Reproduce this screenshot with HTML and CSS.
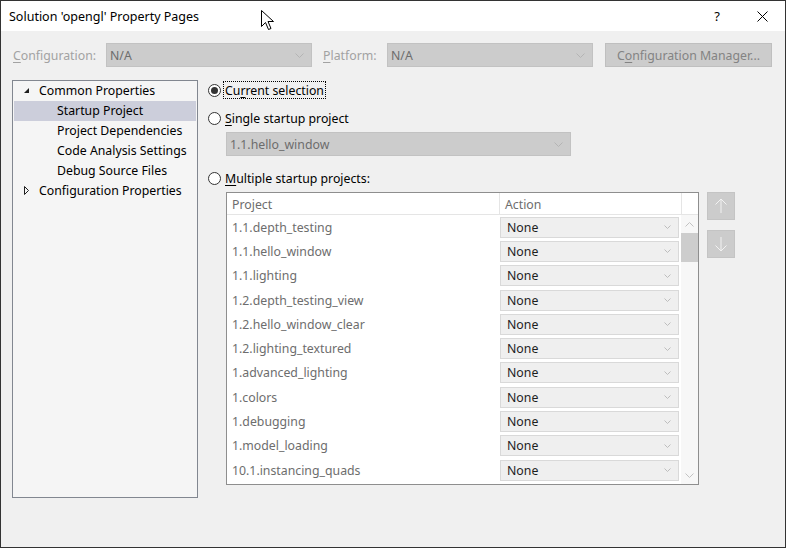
FILE: index.html
```html
<!DOCTYPE html>
<html>
<head>
<meta charset="utf-8">
<title>Solution 'opengl' Property Pages</title>
<link rel="stylesheet" href="styles.css">
</head>
<body>
<div class="window">
  <div class="titlebar">
    <span class="title">Solution 'opengl' Property Pages</span>
    <span class="tb-btn tb-help">?</span>
    <span class="tb-btn tb-close">
      <svg width="11" height="11" viewBox="0 0 11 11"><path d="M0.5 0.5 L10.5 10.5 M10.5 0.5 L0.5 10.5" stroke="#000" stroke-width="1" fill="none"/></svg>
    </span>
  </div>

  <div class="toolbar">
    <span class="lbl lbl-config"><u>C</u>onfiguration:</span>
    <div class="combo combo-wide"><span class="combo-text">N/A</span>
      <svg class="chev" width="9" height="5" viewBox="0 0 9 5"><path d="M0.5 0.5 L4.5 4.5 L8.5 0.5" stroke="#b4b4b4" fill="none"/></svg>
    </div>
    <span class="lbl lbl-platform"><u>P</u>latform:</span>
    <div class="combo combo-wide"><span class="combo-text">N/A</span>
      <svg class="chev" width="9" height="5" viewBox="0 0 9 5"><path d="M0.5 0.5 L4.5 4.5 L8.5 0.5" stroke="#b4b4b4" fill="none"/></svg>
    </div>
    <div class="btn-cm">C<u>o</u>nfiguration Manager...</div>
  </div>

  <div class="main">
    <div class="tree">
      <div class="tree-row lvl0">
        <svg class="tri" width="7" height="7" viewBox="0 0 7 7"><path d="M6 1 L6 6 L1 6 Z" fill="#1e1e1e"/></svg>
        <span>Common Properties</span>
      </div>
      <div class="tree-row lvl1 selected"><span>Startup Project</span></div>
      <div class="tree-row lvl1"><span>Project Dependencies</span></div>
      <div class="tree-row lvl1"><span>Code Analysis Settings</span></div>
      <div class="tree-row lvl1"><span>Debug Source Files</span></div>
      <div class="tree-row lvl0">
        <svg class="tri" width="7" height="9" viewBox="0 0 7 9"><path d="M1.5 0.5 L5.5 4.5 L1.5 8.5 Z" fill="none" stroke="#1e1e1e"/></svg>
        <span>Configuration Properties</span>
      </div>
    </div>

    <div class="panel">
      <div class="radio-row r1">
        <span class="radio checked"></span>
        <span class="radio-label focus">Cu<u>r</u>rent selection</span>
      </div>
      <div class="radio-row r2">
        <span class="radio"></span>
        <span class="radio-label"><u>S</u>ingle startup project</span>
      </div>
      <div class="combo combo-single"><span class="combo-text">1.1.hello_window</span>
        <svg class="chev" width="9" height="5" viewBox="0 0 9 5"><path d="M0.5 0.5 L4.5 4.5 L8.5 0.5" stroke="#b4b4b4" fill="none"/></svg>
      </div>
      <div class="radio-row r3">
        <span class="radio"></span>
        <span class="radio-label"><u>M</u>ultiple startup projects:</span>
      </div>

      <div class="multi">
        <div class="table">
          <div class="thead">
            <div class="th th-project">Project</div>
            <div class="th th-action">Action</div>
            <div class="th th-rest"></div>
          </div>
          <div class="tbody">
            <div class="rows">
              <div class="row"><div class="td-project">1.1.depth_testing</div><div class="td-action"><div class="cell-combo"><span>None</span><svg class="chev-s" width="7" height="4" viewBox="0 0 7 4"><path d="M0.5 0.5 L3.5 3.5 L6.5 0.5" stroke="#bdbdbd" fill="none"/></svg></div></div></div>
              <div class="row"><div class="td-project">1.1.hello_window</div><div class="td-action"><div class="cell-combo"><span>None</span><svg class="chev-s" width="7" height="4" viewBox="0 0 7 4"><path d="M0.5 0.5 L3.5 3.5 L6.5 0.5" stroke="#bdbdbd" fill="none"/></svg></div></div></div>
              <div class="row"><div class="td-project">1.1.lighting</div><div class="td-action"><div class="cell-combo"><span>None</span><svg class="chev-s" width="7" height="4" viewBox="0 0 7 4"><path d="M0.5 0.5 L3.5 3.5 L6.5 0.5" stroke="#bdbdbd" fill="none"/></svg></div></div></div>
              <div class="row"><div class="td-project">1.2.depth_testing_view</div><div class="td-action"><div class="cell-combo"><span>None</span><svg class="chev-s" width="7" height="4" viewBox="0 0 7 4"><path d="M0.5 0.5 L3.5 3.5 L6.5 0.5" stroke="#bdbdbd" fill="none"/></svg></div></div></div>
              <div class="row"><div class="td-project">1.2.hello_window_clear</div><div class="td-action"><div class="cell-combo"><span>None</span><svg class="chev-s" width="7" height="4" viewBox="0 0 7 4"><path d="M0.5 0.5 L3.5 3.5 L6.5 0.5" stroke="#bdbdbd" fill="none"/></svg></div></div></div>
              <div class="row"><div class="td-project">1.2.lighting_textured</div><div class="td-action"><div class="cell-combo"><span>None</span><svg class="chev-s" width="7" height="4" viewBox="0 0 7 4"><path d="M0.5 0.5 L3.5 3.5 L6.5 0.5" stroke="#bdbdbd" fill="none"/></svg></div></div></div>
              <div class="row"><div class="td-project">1.advanced_lighting</div><div class="td-action"><div class="cell-combo"><span>None</span><svg class="chev-s" width="7" height="4" viewBox="0 0 7 4"><path d="M0.5 0.5 L3.5 3.5 L6.5 0.5" stroke="#bdbdbd" fill="none"/></svg></div></div></div>
              <div class="row"><div class="td-project">1.colors</div><div class="td-action"><div class="cell-combo"><span>None</span><svg class="chev-s" width="7" height="4" viewBox="0 0 7 4"><path d="M0.5 0.5 L3.5 3.5 L6.5 0.5" stroke="#bdbdbd" fill="none"/></svg></div></div></div>
              <div class="row"><div class="td-project">1.debugging</div><div class="td-action"><div class="cell-combo"><span>None</span><svg class="chev-s" width="7" height="4" viewBox="0 0 7 4"><path d="M0.5 0.5 L3.5 3.5 L6.5 0.5" stroke="#bdbdbd" fill="none"/></svg></div></div></div>
              <div class="row"><div class="td-project">1.model_loading</div><div class="td-action"><div class="cell-combo"><span>None</span><svg class="chev-s" width="7" height="4" viewBox="0 0 7 4"><path d="M0.5 0.5 L3.5 3.5 L6.5 0.5" stroke="#bdbdbd" fill="none"/></svg></div></div></div>
              <div class="row"><div class="td-project">10.1.instancing_quads</div><div class="td-action"><div class="cell-combo"><span>None</span><svg class="chev-s" width="7" height="4" viewBox="0 0 7 4"><path d="M0.5 0.5 L3.5 3.5 L6.5 0.5" stroke="#bdbdbd" fill="none"/></svg></div></div></div>
            </div>
            <div class="vscroll">
              <div class="sb-btn"><svg width="9" height="5" viewBox="0 0 9 5"><path d="M0.5 4.5 L4.5 0.5 L8.5 4.5" stroke="#c2c2c2" fill="none"/></svg></div>
              <div class="sb-thumb"></div>
              <div class="sb-track"></div>
              <div class="sb-btn"><svg width="9" height="5" viewBox="0 0 9 5"><path d="M0.5 0.5 L4.5 4.5 L8.5 0.5" stroke="#c2c2c2" fill="none"/></svg></div>
            </div>
          </div>
        </div>
        <div class="move-btns">
          <div class="move-btn">
            <svg width="12" height="16" viewBox="0 0 12 16"><path d="M6 1 L6 15 M0.5 6.5 L6 1 L11.5 6.5" stroke="#f2f2f2" fill="none"/></svg>
          </div>
          <div class="move-btn">
            <svg width="12" height="16" viewBox="0 0 12 16"><path d="M6 1 L6 15 M0.5 9.5 L6 15 L11.5 9.5" stroke="#f2f2f2" fill="none"/></svg>
          </div>
        </div>
      </div>
    </div>
  </div>

  <svg class="cursor" width="14" height="22" viewBox="0 0 14 22"><path d="M0.5 0.5 L0.5 16.5 L4.5 12.5 L7.5 19.5 L10 18.5 L7 11.5 L12.5 11.5 Z" fill="#fff" stroke="#000" stroke-width="1" stroke-linejoin="miter"/></svg>
</div>
</body>
</html>
```

FILE: styles.css
```css
* { box-sizing: border-box; }
html, body { margin: 0; padding: 0; }
body {
  width: 786px;
  height: 548px;
  overflow: hidden;
  font-family: "Noto Sans", "Open Sans", sans-serif;
  font-size: 12.3px;
  color: #000;
  background: #f0f0f0;
}
u { text-decoration: underline; text-underline-offset: 2px; }

.window {
  position: relative;
  width: 786px;
  height: 548px;
  border: 1px solid #333;
  background: #f0f0f0;
}

/* title bar */
.titlebar {
  height: 30px;
  background: #fff;
  display: flex;
  align-items: center;
  padding-left: 8px;
}
.title { flex: 1; font-size: 12.5px; color: #000; }
.tb-btn {
  height: 30px;
  display: flex;
  align-items: center;
  justify-content: center;
}
.tb-help { width: 44px; font-size: 13px; }
.tb-close { width: 46px; }

/* toolbar */
.toolbar {
  margin-top: 12px;
  height: 24px;
  display: flex;
  align-items: center;
  padding-left: 12px;
}
.lbl { color: #a2a2a2; }
.lbl-config { width: 93px; }
.lbl-platform { margin-left: 11px; width: 64px; }
.combo {
  height: 24px;
  background: #cccccc;
  border: 1px solid #c2c2c2;
  display: flex;
  align-items: center;
  padding-left: 3px;
  padding-right: 7px;
}
.combo-text { flex: 1; color: #6d6d6d; }
.combo-wide { width: 206px; }
.btn-cm {
  margin-left: 12px;
  width: 167px;
  height: 24px;
  background: #cccccc;
  border: 1px solid #bfbfbf;
  color: #838383;
  display: flex;
  align-items: center;
  justify-content: center;
}

/* main */
.main {
  margin-top: 13px;
  display: flex;
  padding-left: 11px;
}
.tree {
  width: 186px;
  height: 418px;
  border: 1px solid #828790;
  background: #f5f5f5;
}
.tree-row {
  height: 20px;
  display: flex;
  align-items: center;
  margin: 0 1px;
  padding-bottom: 1px;
  white-space: nowrap;
}
.tree-row.lvl0 { padding-left: 9px; }
.tree-row.lvl0 .tri { width: 7px; margin-right: 9px; flex: none; }
.tree-row.lvl1 { padding-left: 43px; }
.tree-row.selected { background: #cccedb; }

.panel {
  margin-left: 10px;
  flex: 1;
}
.radio-row {
  height: 20px;
  display: flex;
  align-items: center;
}
.r2 { margin-top: 8px; }
.r3 { margin-top: 12px; }
.radio {
  width: 13px;
  height: 13px;
  border: 1px solid #333;
  border-radius: 50%;
  background: #fff;
  display: flex;
  align-items: center;
  justify-content: center;
  flex: none;
}
.radio.checked::after {
  content: "";
  width: 7px;
  height: 7px;
  border-radius: 50%;
  background: #333;
}
.radio-label {
  margin-left: 2px;
  padding: 0 1px;
  height: 18px;
  display: flex;
  align-items: center;
  border: 1px solid transparent;
}
.radio-label.focus { border: 1px dotted #000; }

.combo-single {
  margin-top: 4px;
  margin-left: 18px;
  width: 345px;
}

.multi {
  margin-top: 4px;
  margin-left: 18px;
  display: flex;
}
.table {
  width: 473px;
  height: 293px;
  border: 1px solid #8e8e8e;
  background: #fff;
  display: flex;
  flex-direction: column;
}
.thead {
  height: 22px;
  display: flex;
  border-bottom: 1px solid #e5e5e5;
  color: #6d6d6d;
}
.th { display: flex; align-items: center; padding-left: 5px; padding-top: 2px; }
.th-project { width: 273px; border-right: 1px solid #e5e5e5; }
.th-action { width: 182px; border-right: 1px solid #e5e5e5; }
.th-rest { flex: 1; }
.tbody { flex: 1; display: flex; }
.rows { flex: 1; }
.row {
  height: 24.3px;
  display: flex;
  align-items: center;
}
.td-project { width: 273px; padding-left: 5px; color: #6d6d6d; }
.td-action { width: 181px; }
.cell-combo {
  width: 179px;
  height: 21px;
  background: #efefef;
  border: 1px solid #d9d9d9;
  display: flex;
  align-items: center;
  padding-left: 6px;
  padding-right: 7px;
  color: #1e1e1e;
}
.cell-combo span { flex: 1; }

.vscroll {
  width: 17px;
  display: flex;
  flex-direction: column;
  background: #f7f7f7;
}
.sb-btn {
  height: 18px;
  display: flex;
  align-items: center;
  justify-content: center;
}
.sb-thumb { height: 29px; background: #cdcdcd; }
.sb-track { flex: 1; }

.move-btns {
  margin-left: 8px;
  display: flex;
  flex-direction: column;
  gap: 10px;
}
.move-btn {
  width: 28px;
  height: 28px;
  background: #cccccc;
  border: 1px solid #c4c4c4;
  display: flex;
  align-items: center;
  justify-content: center;
}

.cursor {
  position: absolute;
  left: 260px;
  top: 9px;
}
```
